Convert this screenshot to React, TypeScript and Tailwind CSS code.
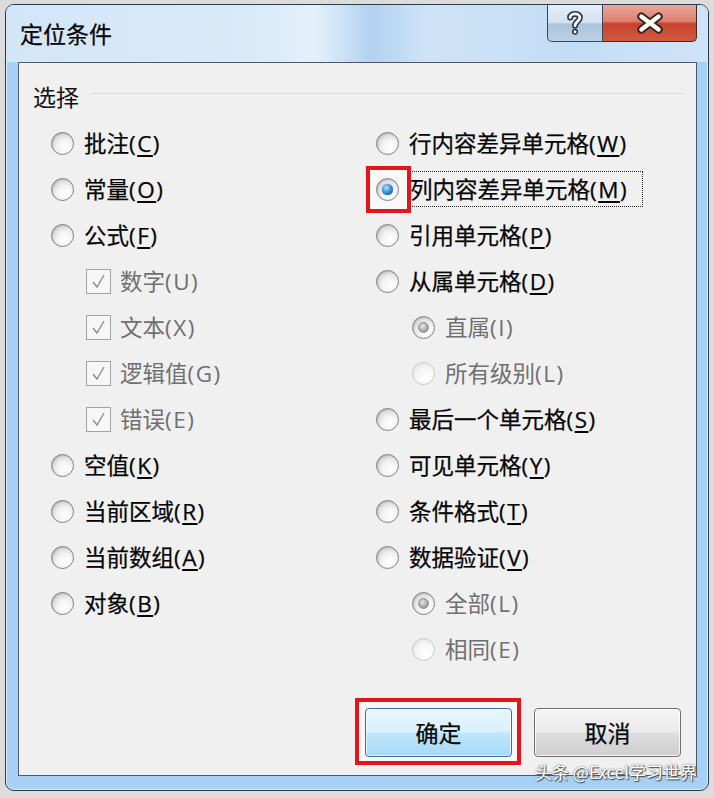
import type { ReactNode } from 'react';

type Item = {
  label: string;
  key: string;
  sub?: 'check' | 'radio';
  disabled?: boolean;
  checked?: boolean;
  focused?: boolean;
};

const LEFT: Item[] = [
  { label: '批注', key: 'C' },
  { label: '常量', key: 'O' },
  { label: '公式', key: 'F' },
  { label: '数字', key: 'U', sub: 'check', disabled: true, checked: true },
  { label: '文本', key: 'X', sub: 'check', disabled: true, checked: true },
  { label: '逻辑值', key: 'G', sub: 'check', disabled: true, checked: true },
  { label: '错误', key: 'E', sub: 'check', disabled: true, checked: true },
  { label: '空值', key: 'K' },
  { label: '当前区域', key: 'R' },
  { label: '当前数组', key: 'A' },
  { label: '对象', key: 'B' },
];

const RIGHT: Item[] = [
  { label: '行内容差异单元格', key: 'W' },
  { label: '列内容差异单元格', key: 'M', checked: true, focused: true },
  { label: '引用单元格', key: 'P' },
  { label: '从属单元格', key: 'D' },
  { label: '直属', key: 'I', sub: 'radio', disabled: true, checked: true },
  { label: '所有级别', key: 'L', sub: 'radio', disabled: true },
  { label: '最后一个单元格', key: 'S' },
  { label: '可见单元格', key: 'Y' },
  { label: '条件格式', key: 'T' },
  { label: '数据验证', key: 'V' },
  { label: '全部', key: 'L', sub: 'radio', disabled: true, checked: true },
  { label: '相同', key: 'E', sub: 'radio', disabled: true },
];

function Radio({ checked, disabled }: { checked?: boolean; disabled?: boolean }) {
  return (
    <span
      className={[
        'flex h-[23px] w-[23px] shrink-0 items-center justify-center rounded-full border',
        disabled && !checked
          ? 'border-[#c9c9c9] bg-[radial-gradient(circle_at_62%_68%,#ffffff,#f7f7f7_45%,#e2e2e2_85%)]'
          : 'border-[#7f8185] bg-[radial-gradient(circle_at_62%_68%,#ffffff,#f3f3f3_40%,#c9cacc_85%)] shadow-[inset_1px_1px_1px_rgba(0,0,0,0.12)]',
      ].join(' ')}
    >
      {checked && !disabled && (
        <span className="h-[11px] w-[11px] rounded-full bg-[radial-gradient(circle_at_40%_35%,#b9e4ff,#3a92dc_45%,#0c4585_100%)] shadow-[0_0_1px_#0b3d73]" />
      )}
      {checked && disabled && (
        <span className="h-[11px] w-[11px] rounded-full border border-[#8c8c8c] bg-[radial-gradient(circle_at_40%_35%,#e6e6e6,#a6a6a6_60%,#8a8a8a)]" />
      )}
    </span>
  );
}

function Check() {
  return (
    <span className="flex h-[25px] w-[25px] shrink-0 items-center justify-center border border-[#a3a3a3] bg-[#f7f7f7]">
      <svg width="17" height="17" viewBox="0 0 17 17" fill="none">
        <path d="M3 9 L7 14 L14 2" stroke="#8a8a8a" strokeWidth="1.3" />
      </svg>
    </span>
  );
}

function Label({ item }: { item: Item }) {
  return (
    <span
      className={[
        'whitespace-nowrap text-[22.5px] leading-[30px]',
        item.disabled ? 'text-[#6f6f6f]' : 'text-[#050505] [-webkit-text-stroke:0.25px_#050505]',
        item.focused ? 'border border-dotted border-[#222] pr-[14px] leading-[32px]' : '',
      ].join(' ')}
    >
      {item.label}
      <span className="tracking-[1.5px]" style={{ fontFamily: '"Open Sans", "Noto Sans", sans-serif' }}>
        (
        {item.disabled ? item.key : <u className="underline-offset-[3px] decoration-[1.5px]">{item.key}</u>})
      </span>
    </span>
  );
}

function Row({ item }: { item: Item }) {
  if (item.sub === 'check') {
    return (
      <div className="flex h-[46px] items-center gap-[9px] pl-[35px]">
        <Check />
        <Label item={item} />
      </div>
    );
  }
  return (
    <div
      className={[
        'flex h-[46px] items-center gap-[10px]',
        item.sub === 'radio' ? 'pl-[36px]' : '',
      ].join(' ')}
    >
      <span className="relative flex">
        {item.focused && (
          <span className="absolute -left-[10px] -top-[12px] h-[47px] w-[45px] border-[4px] border-[#e2151b] bg-white/50" />
        )}
        <span className="relative">
          <Radio checked={item.checked} disabled={item.disabled} />
        </span>
      </span>
      <Label item={item} />
    </div>
  );
}

function DialogButton({ primary, children }: { primary?: boolean; children: ReactNode }) {
  return (
    <div className="relative">
      {primary && (
        <span className="absolute -left-[10px] -top-[10px] h-[67px] w-[166px] border-[4px] border-[#e2151b] bg-[#f7f7f7]" />
      )}
      <button
        type="button"
        className={[
          'relative flex h-[49px] w-[147px] items-center justify-center rounded-[4px] border text-[23px] text-[#050505] [-webkit-text-stroke:0.25px_#050505]',
          primary
            ? 'border-[#3c6f9e] bg-[linear-gradient(180deg,#eaf6fd_0%,#d9f0fc_48%,#bee6fd_52%,#a7d9f5_100%)] shadow-[inset_0_0_0_1px_rgba(255,255,255,0.7)]'
            : 'border-[#707070] bg-[linear-gradient(180deg,#f4f4f4_0%,#ebebeb_48%,#dddddd_52%,#cfcfcf_100%)] shadow-[inset_0_0_0_1px_rgba(255,255,255,0.8)]',
        ].join(' ')}
      >
        {children}
      </button>
    </div>
  );
}

export default function App() {
  return (
    <div
      className="h-[798px] w-[714px] bg-[#dcdcdc] pb-[7px] pl-[5px] pr-[5px] pt-[4px]"
      style={{ fontFamily: '"Noto Sans CJK SC", "Noto Sans", sans-serif' }}
    >
      <div className="relative flex h-full flex-col overflow-hidden rounded-[9px] border border-[#2f3a47] bg-[#a6d0f4] shadow-[inset_0_0_0_1px_rgba(255,255,255,0.6)]">
        {/* Title bar */}
        <div className="flex h-[57px] shrink-0 justify-between bg-[linear-gradient(90deg,#d3e6f8_0%,#d9eaf9_35%,#e4f0fb_44%,#b3d2f0_52%,#cfe3f7_60%,#c4ddf5_80%,#cfe3f7_100%)]">
          <span className="pl-[14px] pt-[13px] text-[23px] leading-[30px] text-[#050505] [-webkit-text-stroke:0.25px_#050505]">定位条件</span>
          <div className="mr-[11px] flex h-[37px]">
            <div className="flex w-[56px] items-center justify-center rounded-bl-[5px] border border-t-0 border-[#3b4756] bg-[linear-gradient(180deg,#e3eef8_0%,#d2e2f0_50%,#adc5dc_52%,#b9d0e6_100%)]">
              <svg width="18" height="26" viewBox="0 0 16 24" fill="none">
                <path d="M3.5 7 C3.5 2.5 12.5 2.5 12.5 7 C12.5 10.5 8 10.5 8 14.5" stroke="#2b3440" strokeWidth="5.5" strokeLinecap="round" />
                <circle cx="8" cy="20" r="2.8" fill="#2b3440" />
                <path d="M3.5 7 C3.5 2.5 12.5 2.5 12.5 7 C12.5 10.5 8 10.5 8 14.5" stroke="#f4f7fb" strokeWidth="2.6" strokeLinecap="round" />
                <circle cx="8" cy="20" r="1.4" fill="#f4f7fb" />
              </svg>
            </div>
            <div className="flex w-[94px] items-center justify-center rounded-br-[5px] border border-l-0 border-t-0 border-[#3d2a27] bg-[linear-gradient(180deg,#eaa799_0%,#dd8070_45%,#c8432d_52%,#d05a3f_100%)]">
              <svg width="28" height="22" viewBox="0 0 26 20" fill="none">
                <path d="M5 4 L21 16 M21 4 L5 16" stroke="#3a2420" strokeWidth="7.5" strokeLinecap="round" />
                <path d="M5 4 L21 16 M21 4 L5 16" stroke="#ffffff" strokeWidth="4" strokeLinecap="round" />
              </svg>
            </div>
          </div>
        </div>

        {/* Content */}
        <div className="mb-[14px] ml-[12px] mr-[11px] flex flex-1 flex-col border border-[#4b5a6b] bg-[#f0f0f0] px-[12px] pt-[18px]">
          <div className="flex items-center">
            <span className="ml-[2px] text-[23px] leading-[30px] text-[#111]">选择</span>
            <span className="mb-[6px] ml-[12px] mr-[1px] h-px flex-1 bg-[#d3dce3]" />
          </div>

          <div className="mt-[9px] grid grid-cols-[345px_1fr]">
            <div className="flex flex-col pl-[20px]">
              {LEFT.map((item) => (
                <Row key={item.label} item={item} />
              ))}
            </div>
            <div className="flex flex-col">
              {RIGHT.map((item) => (
                <Row key={item.label} item={item} />
              ))}
            </div>
          </div>

          <div className="mt-[36px] flex justify-end gap-[22px] pr-[3px]">
            <DialogButton primary>确定</DialogButton>
            <DialogButton>取消</DialogButton>
          </div>
        </div>

        {/* Watermark */}
        <span className="absolute bottom-[8px] right-[11px] text-[17px] leading-[20px] text-white [text-shadow:0_0_2px_#555,1px_1px_1px_#444]">
          头条 @Excel学习世界
        </span>
      </div>
    </div>
  );
}
